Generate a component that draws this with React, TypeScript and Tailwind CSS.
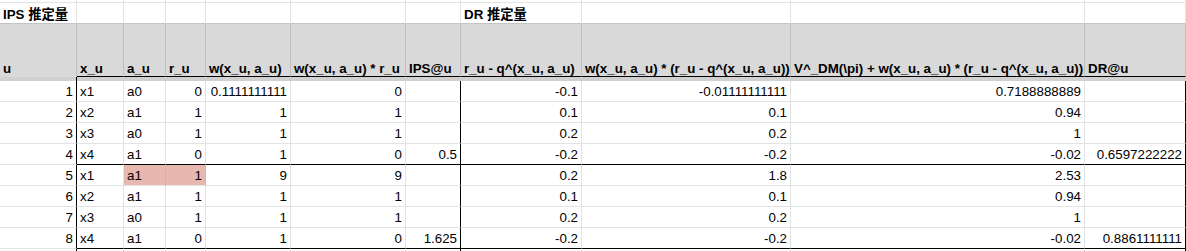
import React from "react";

const COLS = "grid-cols-[77px_47px_42px_40px_85px_115px_55px_121px_209px_294px_101px]";

const headers = [
  "u",
  "x_u",
  "a_u",
  "r_u",
  "w(x_u, a_u)",
  "w(x_u, a_u) * r_u",
  "IPS@u",
  "r_u - q^(x_u, a_u)",
  "w(x_u, a_u) * (r_u - q^(x_u, a_u))",
  "V^_DM(\\pi) + w(x_u, a_u) * (r_u - q^(x_u, a_u))",
  "DR@u",
];

const rows: string[][] = [
  ["1", "x1", "a0", "0", "0.1111111111", "0", "", "-0.1", "-0.01111111111", "0.7188888889", ""],
  ["2", "x2", "a1", "1", "1", "1", "", "0.1", "0.1", "0.94", ""],
  ["3", "x3", "a0", "1", "1", "1", "", "0.2", "0.2", "1", ""],
  ["4", "x4", "a1", "0", "1", "0", "0.5", "-0.2", "-0.2", "-0.02", "0.6597222222"],
  ["5", "x1", "a1", "1", "9", "9", "", "0.2", "1.8", "2.53", ""],
  ["6", "x2", "a1", "1", "1", "1", "", "0.1", "0.1", "0.94", ""],
  ["7", "x3", "a0", "1", "1", "1", "", "0.2", "0.2", "1", ""],
  ["8", "x4", "a1", "0", "1", "0", "1.625", "-0.2", "-0.2", "-0.02", "0.8861111111"],
];

const leftCols = new Set([1, 2]);
const blackRight = new Set([0, 6, 10]);

export default function App() {
  const idx = Array.from({ length: 11 }, (_, i) => i);
  return (
    <div
      className="w-[1186px] h-[251px] bg-white text-black overflow-hidden text-[13.33px] leading-[15px]"
      style={{ fontFamily: '"Liberation Sans", Arial, "Noto Sans CJK JP", sans-serif' }}
    >
      {/* sliver row */}
      <div className={`grid ${COLS} h-[3px]`}>
        {idx.map((i) => (
          <div key={i} className="border-r border-b border-[#e2e3e3]" />
        ))}
      </div>
      {/* title row */}
      <div className={`grid ${COLS} h-[21px]`}>
        {idx.map((i) => (
          <div
            key={i}
            className="border-r border-r-[#e2e3e3] border-b border-b-[#c4c4c4] flex items-end px-[3px] pb-[1px] font-bold whitespace-nowrap"
          >
            {i === 0 ? "IPS 推定量" : i === 7 ? "DR 推定量" : ""}
          </div>
        ))}
      </div>
      {/* header row */}
      <div className={`grid ${COLS} h-[53px] bg-[#d9d9d9]`}>
        {idx.map((i) => (
          <div
            key={i}
            className={`border-r border-r-[#c0c0c0] border-b ${
              i === 0 ? "border-b-[#d9d9d9]" : "border-b-black"
            } flex items-end px-[3px] font-bold whitespace-nowrap`}
          >
            {headers[i]}
          </div>
        ))}
      </div>
      {/* freeze band */}
      <div className={`grid ${COLS} h-[4px] bg-[#d0d0d0]`}>
        {idx.map((i) => (
          <div key={i} className={i === 0 ? "border-r border-black" : ""} />
        ))}
      </div>
      {/* body */}
      {rows.map((r, ri) => (
        <div key={ri} className={`grid ${COLS} h-[21px]`}>
          {r.map((v, ci) => {
            const bottomBlack = (ri === 3 || ri === 7) && ci > 0;
            const pink = ri === 4 && (ci === 2 || ci === 3);
            return (
              <div
                key={ci}
                className={`border-r border-b ${
                  blackRight.has(ci)
                    ? "border-r-black"
                    : pink
                    ? "border-r-[#dbaea5]"
                    : "border-r-[#e2e3e3]"
                } ${bottomBlack ? "border-b-black" : "border-b-[#e2e3e3]"} ${
                  pink ? "bg-[#e6b8af]" : ""
                } flex items-end ${
                  leftCols.has(ci) ? "justify-start" : "justify-end"
                } px-[3px] pb-[2px] whitespace-nowrap`}
              >
                {v}
              </div>
            );
          })}
        </div>
      ))}
      {/* trailing sliver */}
      <div className={`grid ${COLS} h-[2px]`}>
        {idx.map((i) => (
          <div
            key={i}
            className={`border-r ${
              i === 0 || i === 6 || i === 10 ? "border-black" : "border-[#e2e3e3]"
            }`}
          />
        ))}
      </div>
    </div>
  );
}
